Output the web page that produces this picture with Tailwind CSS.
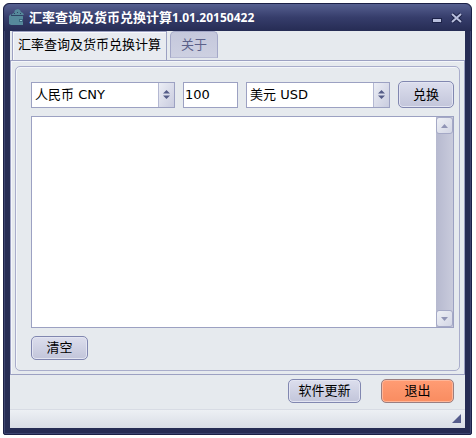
<!DOCTYPE html>
<html lang="zh-CN">
<head>
    <meta charset="UTF-8">
    <meta name="viewport" content="width=device-width, initial-scale=1.0">
    <title>汇率查询及货币兑换计算</title>
    <script src="https://cdn.jsdelivr.net/npm/@tailwindcss/browser@4"></script>
</head>

<body class="bg-white min-h-screen flex pt-[3px] pl-[3px] pr-1 pb-[3px] text-[13px] leading-4 text-black font-['DejaVu_Sans','Noto_Sans_CJK_SC',sans-serif]">

    <div class="flex-1 flex flex-col rounded-t-md rounded-b-xs bg-[#262c54] border border-[#1b2046] shadow-[inset_0_0_0_1px_#3d4570]">

        <!-- title bar -->
        <header class="h-[27px] shrink-0 flex items-center pl-[5px] pr-2 rounded-t-md bg-linear-to-b from-[#566090] via-[#363d6b] to-[#262c54] text-white">
            <svg class="w-4 h-[18px] mr-1" viewBox="0 0 16 18" fill="#56899b">
                <path d="M3 5l2-1 1-3 3-1 2 1 1 2 2 1 1 2H3z"/>
                <path d="M0 7l2-2 1 2h11v9H2l-2-1z"/>
                <path d="M2 6h11v1H2zM5 4h1v1H5zM8 3h1v1H8zM11 4h1v1h-1z" fill="#2f4465"/>
                <path d="M10 10h4v3h-4z" fill="#3c6880"/>
                <path d="M11 11h2v1h-2z" fill="#8fc0ca"/>
            </svg>
            <h1 class="font-bold whitespace-nowrap">汇率查询及货币兑换计算<span class="text-xs font-['Noto_Sans',sans-serif]">1.01.20150422</span></h1>
            <button type="button" class="ml-auto mr-2" aria-label="最小化">
                <svg class="w-3 h-3" viewBox="0 0 12 12"><path d="M1 6h10v5H1z" fill="#1d2348"/><path d="M2 7h8v3H2z" fill="#b9bfdd"/></svg>
            </button>
            <button type="button" aria-label="关闭">
                <svg class="w-3 h-3" viewBox="0 0 12 12" fill="none"><path d="M1 2l9 8M10 2l-9 8" stroke="#1d2348" stroke-width="4"/><path d="M1 2l9 8M10 2l-9 8" stroke="#b9bfdd" stroke-width="2"/></svg>
            </button>
        </header>

        <div class="flex-1 flex flex-col mx-1.5 mb-1.5 bg-[#e6eaee]">

            <!-- tabs -->
            <nav class="flex items-start pl-0.5 gap-[3px] h-[29px]">
                <button type="button" class="h-[29px] px-[5px] pb-0.5 border border-b-0 border-[#9ca1c2] bg-[#e8ebf0] shadow-[inset_1px_1px_#f8f9fc] whitespace-nowrap">汇率查询及货币兑换计算</button>
                <button type="button" class="h-[27px] w-12 border border-[#a4a8c8] border-b-[#b9bcd5] rounded-t-[5px] bg-linear-to-b from-[#c5c8dc] to-[#cdd0e1] text-[#5c6189]">关于</button>
            </nav>

            <main class="flex-1 flex flex-col p-1 pb-[3px] pt-[5px] border border-[#9ca1c2] shadow-[inset_1px_1px_#f4f6fa]">
                <div class="flex-1 flex flex-col gap-2 pl-[15px] pr-[5px] pt-3.5 pb-2.5 border border-[#a9adcb] rounded-[5px] shadow-[inset_1px_1px_#f4f6fa]">

                    <form class="flex items-center gap-2">
                        <div class="relative flex-1">
                            <select aria-label="原币种" class="appearance-none block w-full h-[26px] pl-[3px] pr-5 bg-white border border-[#9ca1c2]">
                                <option>人民币 CNY</option>
                            </select>
                            <span class="absolute inset-y-px right-px w-4 flex items-center justify-center border-l border-[#b4b8d2] bg-linear-to-br from-[#eceef5] to-[#c9ccdf] pointer-events-none">
                                <svg class="w-[7px] h-[9px]" viewBox="0 0 14 18" fill="#555c88"><path d="M0 7L7 0L14 7zM0 11L7 18L14 11z"/></svg>
                            </span>
                        </div>
                        <input type="text" aria-label="金额" value="100" class="w-[55px] h-[26px] px-px bg-white border border-[#9ca1c2]">
                        <div class="relative flex-1">
                            <select aria-label="目标币种" class="appearance-none block w-full h-[26px] pl-[3px] pr-5 bg-white border border-[#9ca1c2]">
                                <option>美元 USD</option>
                            </select>
                            <span class="absolute inset-y-px right-px w-4 flex items-center justify-center border-l border-[#b4b8d2] bg-linear-to-br from-[#eceef5] to-[#c9ccdf] pointer-events-none">
                                <svg class="w-[7px] h-[9px]" viewBox="0 0 14 18" fill="#555c88"><path d="M0 7L7 0L14 7zM0 11L7 18L14 11z"/></svg>
                            </span>
                        </div>
                        <button type="button" class="w-14 h-[27px] rounded-[5px] border border-[#8187b0] bg-linear-to-b from-[#dcdeed] to-[#c2c5da] shadow-[inset_0_0_0_1px_#e3e5f2]">兑换</button>
                    </form>

                    <!-- result box -->
                    <div class="flex-1 flex bg-white border border-[#9ca1c2]">
                        <textarea aria-label="结果" class="flex-1 min-w-0 resize-none p-1 outline-none"></textarea>
                        <div class="w-[17px] flex flex-col justify-between bg-linear-to-r from-[#b6b9cf] to-[#c9cbdc]">
                            <button type="button" aria-label="向上滚动" class="h-[17px] flex items-center justify-center rounded-[3px] border border-[#a5a9c6] bg-linear-to-br from-[#eef0f5] to-[#d3d6e5]">
                                <svg class="w-[7px] h-1" viewBox="0 0 14 8" fill="#9094b5"><path d="M0 8L7 0L14 8z"/></svg>
                            </button>
                            <button type="button" aria-label="向下滚动" class="h-[17px] flex items-center justify-center rounded-[3px] border border-[#a5a9c6] bg-linear-to-br from-[#eef0f5] to-[#d3d6e5]">
                                <svg class="w-[7px] h-1" viewBox="0 0 14 8" fill="#9094b5"><path d="M0 0L7 8L14 0z"/></svg>
                            </button>
                        </div>
                    </div>

                    <button type="button" class="w-[57px] h-6 rounded-[5px] border border-[#8187b0] bg-linear-to-b from-[#dcdeed] to-[#c2c5da] shadow-[inset_0_0_0_1px_#e3e5f2]">清空</button>
                </div>
            </main>

            <div class="h-[34px] shrink-0 flex items-center justify-end gap-5 pt-px pb-1 pr-[11px]">
                <button type="button" class="w-[73px] h-6 rounded-[5px] border border-[#8187b0] bg-linear-to-b from-[#dcdeed] to-[#c2c5da] shadow-[inset_0_0_0_1px_#e3e5f2]">软件更新</button>
                <button type="button" class="w-[73px] h-6 rounded-[5px] border border-[#9a7e80] bg-linear-to-b from-[#ff9c74] to-[#f98c60] shadow-[inset_0_0_0_1px_#ffb698]">退出</button>
            </div>

            <!-- status bar -->
            <footer class="h-[19px] shrink-0 flex items-end justify-end pb-[5px] pr-1 border-t border-[#d8dce4] bg-linear-to-b from-[#edf0f4] to-[#d9dde6]">
                <svg class="w-[9px] h-[9px]" viewBox="0 0 9 9" fill="#555c8c"><path d="M9 0V9H0z"/></svg>
            </footer>
        </div>
    </div>

</body>
</html>
